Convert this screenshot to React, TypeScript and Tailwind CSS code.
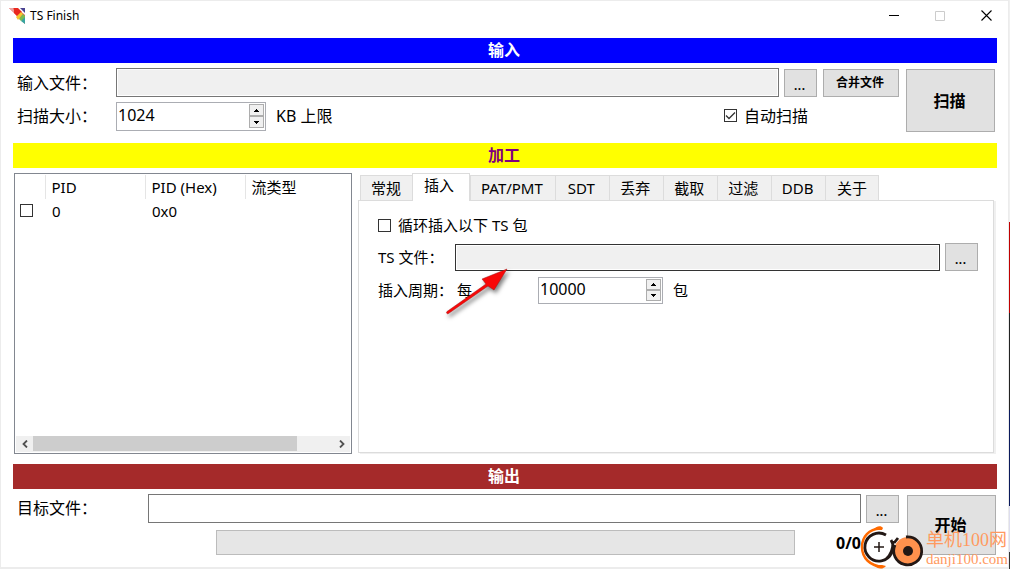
import { useState } from 'react';
import type { ReactNode } from 'react';

const tabs = ['常规', '插入', 'PAT/PMT', 'SDT', '丢弃', '截取', '过滤', 'DDB', '关于'];

function SectionBar({ className, children }: { className: string; children: ReactNode }) {
  return <h2 className={`h-[25px] pr-[2px] text-center text-base leading-[25px] font-bold ${className}`}>{children}</h2>;
}

function PushButton({ className = '', label, children }: { className?: string; label?: string; children: ReactNode }) {
  return (
    <button type="button" aria-label={label} className={`shrink-0 border border-[#adadad] bg-[#e1e1e1] pr-[2px] font-bold ${className}`}>
      {children}
    </button>
  );
}

function BrowseButton({ label }: { label: string }) {
  return (
    <button type="button" aria-label={label} className="h-7 w-[33px] shrink-0 border border-[#adadad] bg-[#e1e1e1] pt-1 pr-[2px] text-sm font-medium">
      ...
    </button>
  );
}

function Spinner({ id, value, onChange, className }: { id: string; value: number; onChange: (n: number) => void; className: string }) {
  return (
    <div className={`flex shrink-0 border border-[#abadb3] bg-white p-px ${className}`}>
      <input
        id={id}
        type="text"
        inputMode="numeric"
        value={value}
        onChange={(e) => onChange(Number(e.target.value) || 0)}
        className="min-w-0 flex-1 pb-[3px] text-base outline-none"
      />
      <div className="mb-px flex w-[15px] flex-col">
        <button type="button" aria-label="+" onClick={() => onChange(value + 1)} className="flex flex-1 items-center justify-center border border-[#adadad] bg-[#f0f0f0]">
          <svg width="5" height="3" viewBox="0 0 5 3" shapeRendering="crispEdges"><path d="M2 0h1v1h1v1h1v1H0V2h1V1h1z" /></svg>
        </button>
        <button type="button" aria-label="-" onClick={() => onChange(value - 1)} className="flex flex-1 items-center justify-center border border-[#adadad] bg-[#f0f0f0]">
          <svg width="5" height="3" viewBox="0 0 5 3" shapeRendering="crispEdges"><path d="M0 0h5v1H4v1H3v1H2V2H1V1H0z" /></svg>
        </button>
      </div>
    </div>
  );
}

function TickBox({ id, label, checked, onChange }: { id: string; label?: string; checked: boolean; onChange: (v: boolean) => void }) {
  return (
    <span className="relative flex size-[13px] shrink-0">
      <input
        id={id}
        type="checkbox"
        aria-label={label}
        checked={checked}
        onChange={(e) => onChange(e.target.checked)}
        className="size-[13px] appearance-none border border-[#333] bg-white"
      />
      {checked && (
        <svg className="pointer-events-none absolute inset-0" width="13" height="13" viewBox="0 0 13 13" fill="none" stroke="#333" strokeWidth="1.3">
          <path d="M2 6.500 5 9.500l6-6" />
        </svg>
      )}
    </span>
  );
}

function TitleBar() {
  return (
    <header className="flex h-[37px] items-start">
      <div className="flex h-[29px] flex-1 items-center gap-1 pl-2">
        <svg width="17" height="16" viewBox="0 0 17 16">
          <path d="M0 0h8l8 7v9z" fill="#ef5a50" />
          <path d="M0 0h4l2 5z" fill="#e9a3a3" />
          <path d="M5 0h4l4 4-5 4-3-3z" fill="#e9281e" />
          <path d="M12 4l2 2-5 6-2-3z" fill="#f5c62c" />
          <path d="M14 6l2 2v2l-4 3-2-2z" fill="#79bd50" />
          <path d="M12 13l4-4v7z" fill="#38a5a0" />
          <path d="M11 0h5v5z" fill="#4a4391" />
        </svg>
        <h1 className="text-xs">TS Finish</h1>
      </div>
      <div className="-mr-px flex">
        <button type="button" aria-label="最小化" className="flex h-[29px] w-[46px] items-center justify-center">
          <svg width="10" height="11" shapeRendering="crispEdges"><path d="M0 5.500h10" stroke="#000" /></svg>
        </button>
        <button type="button" aria-label="最大化" disabled className="flex h-[29px] w-[46px] items-center justify-center">
          <svg width="10" height="10" fill="none" stroke="#ccc"><path d="M.5.5h9v9h-9z" /></svg>
        </button>
        <button type="button" aria-label="关闭" className="flex h-[29px] w-[46px] items-center justify-center">
          <svg width="11" height="11" stroke="#000" strokeWidth="1.1"><path d="M.5.5l10 10M10.500.5l-10 10" /></svg>
        </button>
      </div>
    </header>
  );
}

function PidList() {
  const [picked, setPicked] = useState(false);

  return (
    <div className="flex w-[338px] shrink-0 flex-col justify-between border border-[#828790] p-px text-[15px]">
      <table className="w-full table-fixed text-left">
        <thead>
          <tr className="h-6">
            <th className="w-[29px] border-r border-[#e5e5e5]" />
            <th className="w-[100px] border-r border-[#e5e5e5] pl-[6px] font-normal">PID</th>
            <th className="w-[100px] border-r border-[#e5e5e5] pl-[6px] font-normal">PID (Hex)</th>
            <th className="pl-[6px] font-normal">流类型</th>
          </tr>
        </thead>
        <tbody>
          <tr className="h-6">
            <td className="pb-px pl-1"><TickBox id="pid-0" label="PID 0" checked={picked} onChange={setPicked} /></td>
            <td className="pl-[7px]">0</td>
            <td className="pl-[7px]">0x0</td>
            <td />
          </tr>
        </tbody>
      </table>
      <div className="flex h-4 bg-[#f0f0f0]">
        <button type="button" aria-label="左移" className="flex w-[17px] items-center justify-center">
          <svg width="6" height="8" fill="none" stroke="#505050" strokeWidth="1.8"><path d="M5 .5 1.500 4 5 7.500" /></svg>
        </button>
        <div className="flex-1"><div className="h-[15px] w-[88%] bg-[#cdcdcd]" /></div>
        <button type="button" aria-label="右移" className="flex w-[17px] items-center justify-center">
          <svg width="6" height="8" fill="none" stroke="#505050" strokeWidth="1.8"><path d="M1 .5 4.500 4 1 7.500" /></svg>
        </button>
      </div>
    </div>
  );
}

function InsertPanel() {
  const [loop, setLoop] = useState(false);
  const [period, setPeriod] = useState(10000);

  return (
    <div className="relative mr-px mb-px flex-1 border border-[#dcdcdc] px-[15px] pt-[13px] pl-[19px] shadow-[2px_1px_0_#f0f0f0]">
      <div className="flex h-[22px] items-center gap-[7px]">
        <TickBox id="loop" checked={loop} onChange={setLoop} />
        <label htmlFor="loop">循环插入以下 TS 包</label>
      </div>
      <div className="mt-[7px] flex items-center">
        <label htmlFor="ts-file" className="w-[77px] shrink-0">TS 文件：</label>
        <input id="ts-file" readOnly className="h-[27px] min-w-0 flex-1 border border-[#333] bg-[#f0f0f0] shadow-[inset_0_0_0_1px_#fff] outline-none" />
        <div className="ml-[5px] flex"><BrowseButton label="浏览 TS 文件" /></div>
      </div>
      <div className="mt-[6px] flex items-center">
        <label htmlFor="period" className="w-[79px] shrink-0">插入周期：</label>
        <span className="w-[81px]">每</span>
        <Spinner id="period" value={period} onChange={setPeriod} className="h-[27px] w-[125px]" />
        <span className="ml-[10px]">包</span>
      </div>
      <svg className="pointer-events-none absolute top-[65px] left-[85px] drop-shadow-[2px_3px_2px_rgba(0,0,0,0.5)]" width="70" height="52" viewBox="0 0 70 52">
        <path d="M3 45.500 42 18 38 13 63 3 50 24 44 20 4.500 47.500a1.200 1.200 0 0 1-1.500-2z" fill="#f80808" stroke="#a01515" strokeWidth=".5" />
      </svg>
    </div>
  );
}

function SiteMark() {
  return (
    <div className="pointer-events-none absolute right-[2px] bottom-0 flex items-end font-['Liberation_Serif','Noto_Sans_CJK_SC',serif] text-[#ff9a5f]">
      <svg width="66" height="44" viewBox="0 0 66 44" fill="none">
        <path d="M20 3.500C9 4 2 12 2 22c0 11 8 19 21 20" stroke="#ff6a00" strokeWidth="2.500" />
        <path d="M13 5c3-4 8-5 10-2l-1 2zM14 40c3 4 8 5 12 1l-4-1z" fill="#ff6a00" />
        <circle cx="19" cy="22" r="14" fill="#fff" />
        <path d="M26 10A14 14 0 1 0 31 15M33 16C33 26 30 31 26 34" stroke="#231815" strokeWidth="2.800" />
        <path d="M19 17v10M14 22h10" stroke="#231815" strokeWidth="1.500" />
        <circle cx="48" cy="26" r="14" fill="#ff914d" />
        <path d="M46 12A14 14 0 1 1 35 20M38 13l-4 5" stroke="#231815" strokeWidth="2.800" />
        <circle cx="48" cy="26" r="5" fill="#231815" />
      </svg>
      <div className="pb-px">
        <div className="text-lg leading-5">单机100网</div>
        <div className="text-[15px] leading-[18px]">danji100.com</div>
      </div>
    </div>
  );
}

export default function App() {
  const [size, setSize] = useState(1024);
  const [auto, setAuto] = useState(true);
  const [tab, setTab] = useState('插入');

  return (
    <div className="relative flex min-h-screen flex-col bg-[linear-gradient(#f0f0f0_39%,#c00000_39%_55%,#222_55%_72%,#0a1a5c_72%_89%,#dde_89%_97%,#333_97%)] pr-px font-['Noto_Sans','Noto_Sans_CJK_SC',sans-serif] text-base leading-normal text-black">
      <div className="flex flex-1 flex-col border border-b-2 border-[#ececec] bg-white">
        <TitleBar />
        <main className="flex flex-1 flex-col pr-[11px] pl-3">
          <SectionBar className="bg-[#0000ff] text-white">输入</SectionBar>
          <section className="flex gap-[7px] pt-[5px] pr-[2px] pl-1">
            <div className="flex-1">
              <div className="flex items-center">
                <label htmlFor="source" className="w-[99px] shrink-0">输入文件：</label>
                <input id="source" readOnly className="h-[29px] min-w-0 flex-1 border border-[#767676] bg-[#f0f0f0] shadow-[inset_0_0_0_1px_#fff] outline-none" />
                <div className="ml-[5px] flex gap-[6px]">
                  <BrowseButton label="浏览输入文件" />
                  <PushButton className="h-7 w-[76px] text-xs">合并文件</PushButton>
                </div>
              </div>
              <div className="mt-[5px] flex items-center">
                <label htmlFor="scan-size" className="w-[99px] shrink-0 pb-[2px]">扫描大小：</label>
                <Spinner id="scan-size" value={size} onChange={setSize} className="h-[29px] w-[150px]" />
                <span className="ml-[10px] flex-1 pb-[2px]">KB 上限</span>
                <div className="mr-[91px] flex items-center gap-[7px] pb-[2px]">
                  <TickBox id="auto-scan" checked={auto} onChange={setAuto} />
                  <label htmlFor="auto-scan">自动扫描</label>
                </div>
              </div>
            </div>
            <PushButton className="mt-px h-[63px] w-[89px]">扫描</PushButton>
          </section>

          <SectionBar className="mt-[11px] bg-[#ffff00] text-[#800080]">加工</SectionBar>
          <section className="flex min-h-[280px] flex-1 gap-[6px] pt-[5px] pr-[2px] pl-px">
            <PidList />
            <div className="flex min-w-0 flex-1 flex-col text-[15px]">
              <div role="tablist" className="flex items-end pl-[2px]">
                {tabs.map((name) => (
                  <button
                    key={name}
                    type="button"
                    role="tab"
                    aria-selected={tab === name}
                    onClick={() => setTab(name)}
                    className={
                      tab === name
                        ? 'relative z-10 -mb-px -ml-px h-[28px] w-[58px] border border-b-0 border-[#dcdcdc] bg-white pr-1 pb-1'
                        : 'h-[25px] min-w-[54px] border border-r-0 border-b-0 border-[#dcdcdc] bg-[#f0f0f0] pr-3 pl-[10px] first:min-w-[52px] last:border-r last:pr-[11px] last:pl-[10px]'
                    }
                  >
                    {name}
                  </button>
                ))}
              </div>
              <InsertPanel />
            </div>
          </section>

          <SectionBar className="mt-[10px] bg-[#a52a2a] text-white">输出</SectionBar>
          <section className="flex gap-2 pt-[5px] pr-px pb-3 pl-1">
            <div className="flex-1">
              <div className="flex items-center">
                <label htmlFor="target" className="w-[131px] shrink-0 pb-[2px]">目标文件：</label>
                <input id="target" className="h-[29px] min-w-0 flex-1 border border-[#767676] bg-white outline-none" />
                <div className="ml-[5px] flex"><BrowseButton label="浏览目标文件" /></div>
              </div>
              <div className="mt-[7px] flex items-center pl-[199px]">
                <div role="progressbar" aria-valuenow={0} className="h-[25px] flex-1 border border-[#bcbcbc] bg-[#e6e6e6]" />
                <span className="w-[104px] pl-[41px] font-bold">0/0</span>
              </div>
            </div>
            <PushButton className="mt-px h-[60px] w-[89px]">开始</PushButton>
          </section>
        </main>
      </div>
      <SiteMark />
    </div>
  );
}
